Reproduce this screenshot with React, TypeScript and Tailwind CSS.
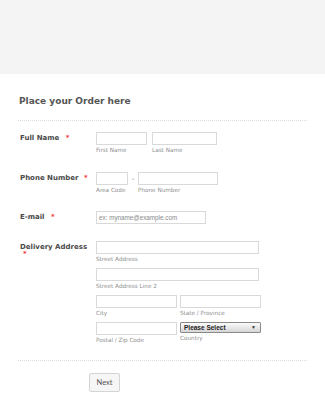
import React from 'react';

const Req = ({ className = '' }: { className?: string }) => (
  <span className={`text-[#f23a3c] ${className}`}>*</span>
);

const Field = ({ w, label, mt = 'mt-0' }: { w: string; label: string; mt?: string }) => (
  <div className={`flex flex-col ${mt}`}>
    <div className={`${w} h-[13px] border border-[#d9d9d9] bg-white`} />
    <span className="mt-[1px] text-[5.7px] leading-[8px] text-[#8f8f8f]">{label}</span>
  </div>
);

const App: React.FC = () => {
  return (
    <div className="w-[325px] h-[400px] bg-white overflow-hidden" style={{ fontFamily: '"DejaVu Sans", Verdana, sans-serif' }}>
      <div className="h-[74px] bg-[#f4f4f4]" />
      <div className="px-[18px]">
        <h1 className="mt-[20px] text-[9px] leading-[14px] font-bold text-[#555] pl-[1px]">Place your Order here</h1>
        <div className="mt-[12px] border-t border-dotted border-[#dcdcdc]" />

        <div className="mt-[11px] flex h-[40px]">
          <div className="w-[78px] pl-[2px] text-[7px] leading-[13px] font-bold text-[#4a4a4a]">
            Full Name <Req className="ml-[4px]" />
          </div>
          <div className="flex gap-[5px]">
            <Field w="w-[51px]" label="First Name" />
            <Field w="w-[65px]" label="Last Name" />
          </div>
        </div>

        <div className="flex h-[39px]">
          <div className="w-[78px] pl-[2px] text-[7px] leading-[12px] font-bold text-[#4a4a4a]">
            Phone Number <Req className="ml-[3px]" />
          </div>
          <div className="flex">
            <Field w="w-[32px]" label="Area Code" />
            <span className="w-[10px] text-center text-[7px] leading-[14px] text-[#777]">-</span>
            <Field w="w-[80px]" label="Phone Number" />
          </div>
        </div>

        <div className="flex h-[30px]">
          <div className="w-[78px] pl-[2px] text-[7px] leading-[12px] font-bold text-[#4a4a4a]">
            E-mail <Req className="ml-[4px]" />
          </div>
          <div className="w-[110px] h-[13px] border border-[#d9d9d9] px-[2px] text-[6.3px] leading-[11px] text-[#8a8a8a]" style={{ fontFamily: '"Liberation Sans", Arial, sans-serif' }}>
            ex: myname@example.com
          </div>
        </div>

        <div className="flex">
          <div className="w-[78px] pl-[2px] text-[7px] leading-[12px] font-bold text-[#4a4a4a]">
            <div>Delivery Address</div>
            <div className="pl-[3px] -mt-[3px] leading-[8px]"><Req /></div>
          </div>
          <div className="flex flex-col">
            <Field w="w-[163px]" label="Street Address" />
            <Field w="w-[163px]" label="Street Address Line 2" mt="mt-[5px]" />
            <div className="mt-[5px] flex gap-[3px]">
              <Field w="w-[81px]" label="City" />
              <Field w="w-[81px]" label="State / Province" />
            </div>
            <div className="mt-[5px] flex gap-[3px]">
              <Field w="w-[81px]" label="Postal / Zip Code" />
              <div className="flex flex-col">
                <div className="w-[81px] h-[11px] border border-[#8a8a8a] rounded-[1px] bg-gradient-to-b from-[#fbfbfb] to-[#d6d6d6] flex items-center justify-between pl-[3px] pr-[4px] text-[6.5px] font-semibold text-[#222]" style={{ fontFamily: '"Liberation Sans", Arial, sans-serif' }}>
                  <span>Please Select</span>
                  <span className="text-[5px] text-[#333]">▼</span>
                </div>
                <span className="mt-[1px] text-[5.7px] leading-[8px] text-[#8f8f8f]">Country</span>
              </div>
            </div>
          </div>
        </div>

        <div className="mt-[16px] border-t border-dotted border-[#dcdcdc]" />
        <div className="mt-[12px] pl-[71px] flex">
          <button className="w-[31px] h-[19px] border border-[#d4d4d4] rounded-[2px] bg-[#f6f6f6] text-[7.5px] leading-[17px] text-[#555]" style={{ fontFamily: 'Lato, "Liberation Sans", sans-serif' }}>
            Next
          </button>
        </div>
      </div>
    </div>
  );
};

export default App;
